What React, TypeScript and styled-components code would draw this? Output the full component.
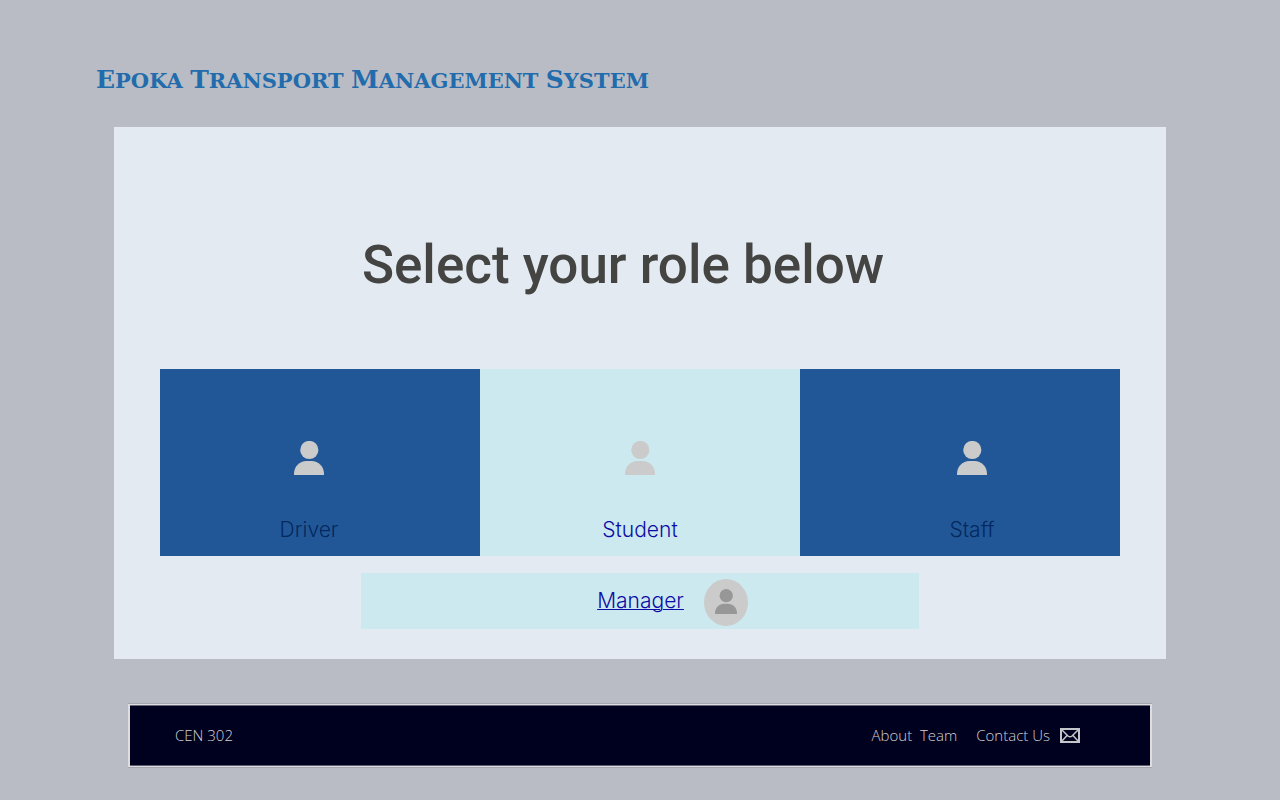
import React from "react";
import styled, { createGlobalStyle } from "styled-components";

const GlobalStyle = createGlobalStyle`
  *, *::before, *::after { box-sizing: border-box; }
  body {
    margin: 0;
    background: #b9bcc4;
    font-family: "Open Sans", "Noto Sans", sans-serif;
  }
`;

const Page = styled.div`
  display: flex;
  flex-direction: column;
  min-height: 100vh;
  padding: 60px 96px 32px;
`;

const Brand = styled.header`
  height: 40px;
  color: #226cad;
  font-family: "Copperplate Gothic Bold", "DejaVu Serif", serif;
  font-size: 21px;
  font-weight: 700;
  line-height: 40px;
  white-space: nowrap;
`;

const BrandWord = styled.span`
  display: inline-block;
  text-transform: uppercase;

  &::first-letter {
    font-size: 25px;
  }
`;

const Panel = styled.main`
  display: flex;
  flex-direction: column;
  margin: 27px 18px 0;
  padding: 102px 46px 30px;
  background: #e3eaf1;
`;

const Heading = styled.h1`
  margin: 0 0 68px;
  padding-right: 34px;
  color: #444443;
  font-family: Bahnschrift, Roboto, sans-serif;
  font-size: 53px;
  font-weight: 500;
  line-height: 72px;
  text-align: center;
`;

const Roles = styled.nav`
  display: grid;
  grid-template-columns: repeat(3, 1fr);
`;

type Side = "left" | "center" | "right";

const sidePadding: Record<Side, string> = {
  left: "0 22px 0 0",
  center: "0",
  right: "0 0 0 24px",
};

const RoleCard = styled.a<{ $dark?: boolean; $side: Side }>`
  display: flex;
  flex-direction: column;
  align-items: center;
  justify-content: flex-end;
  gap: 40px;
  height: 187px;
  padding: ${(p) => sidePadding[p.$side]};
  padding-bottom: 11px;
  background: ${(p) => (p.$dark ? "#225797" : "#cce9ef")};
  color: ${(p) => (p.$dark ? "#03295f" : "#0c0ca6")};
  text-decoration: none;
`;

const RoleLabel = styled.span`
  font-family: "Century Gothic", Inter, sans-serif;
  font-size: 21px;
  font-weight: 300;
  line-height: 30px;
`;

const ManagerLink = styled.a`
  display: flex;
  align-items: center;
  justify-content: center;
  gap: 20px;
  height: 56px;
  margin: 17px 201px 0;
  padding: 3px 0 0 65px;
  background: #cce9ef;
  color: #0c0ca6;
  text-decoration-thickness: 1px;

  ${RoleLabel} {
    padding-bottom: 4px;
  }
`;

const Avatar = styled.span`
  display: flex;
  align-items: center;
  justify-content: center;
  width: 44px;
  height: 47px;
  padding-bottom: 3px;
  border-radius: 50%;
  background: #cbcbcb;
`;

const FooterBar = styled.footer`
  display: flex;
  align-items: center;
  margin: 45px 32px 0;
  height: 63px;
  padding: 0 70px 1px 45px;
  border: solid #dedede;
  border-width: 1px 2px;
  box-shadow: 0 -1px #a5a5ad, 0 1px #a5a5ad, inset 0 1px #66667a, inset 0 -1px #5c5c70;
  background: #00001f;
  color: #d2d2d2;
  font-size: 15px;
  font-weight: 300;
  line-height: 20px;
`;

const FooterLinks = styled.nav`
  display: flex;
  align-items: center;
  gap: 19px;
  margin-left: auto;
`;

const FooterLink = styled.a`
  display: flex;
  align-items: center;
  gap: 10px;
  color: inherit;
  text-decoration: none;
  white-space: pre;
`;

function Person({ width, height, color }: { width: number; height: number; color: string }) {
  return (
    <svg width={width} height={height} viewBox="0 0 30 34" fill={color} aria-hidden="true">
      <circle cx="15.3" cy="9" r="9.1" />
      <path d="M0 34V33C0 25.5 5.5 20 12.5 20H17.5C24.5 20 30 25.5 30 33V34Z" />
    </svg>
  );
}

function Envelope() {
  return (
    <svg width="20" height="15" viewBox="0 0 20 15" fill="none" stroke="#c3c7c9" aria-hidden="true">
      <rect x="1" y="1" width="18" height="13" strokeWidth="2" />
      <path d="M2 2L8 8Q10 9.5 12 8L18 2M2 13L7 7.5M18 13L13 7.5" strokeWidth="1.5" />
    </svg>
  );
}

const brandWords = ["Epoka", "Transport", "Management", "System"];

const roles: { name: string; side: Side; dark: boolean }[] = [
  { name: "Driver", side: "left", dark: true },
  { name: "Student", side: "center", dark: false },
  { name: "Staff", side: "right", dark: true },
];

export default function App() {
  return (
    <>
      <GlobalStyle />
      <Page>
        <Brand>
          {brandWords.map((word) => (
            <React.Fragment key={word}>
              <BrandWord>{word}</BrandWord>{" "}
            </React.Fragment>
          ))}
        </Brand>
        <Panel>
          <Heading>Select your role below</Heading>
          <Roles aria-label="Roles">
            {roles.map((role) => (
              <RoleCard key={role.name} href={`#${role.name.toLowerCase()}`} $dark={role.dark} $side={role.side}>
                <Person width={30} height={34} color="#cbcbcb" />
                <RoleLabel>{role.name}</RoleLabel>
              </RoleCard>
            ))}
          </Roles>
          <ManagerLink href="#manager">
            <RoleLabel>Manager</RoleLabel>
            <Avatar>
              <Person width={22} height={27} color="#979797" />
            </Avatar>
          </ManagerLink>
        </Panel>
        <FooterBar>
          <span>CEN 302</span>
          <FooterLinks aria-label="Footer">
            <FooterLink href="#about">{"About  Team"}</FooterLink>
            <FooterLink href="#contact">
              Contact Us
              <Envelope />
            </FooterLink>
          </FooterLinks>
        </FooterBar>
      </Page>
    </>
  );
}
